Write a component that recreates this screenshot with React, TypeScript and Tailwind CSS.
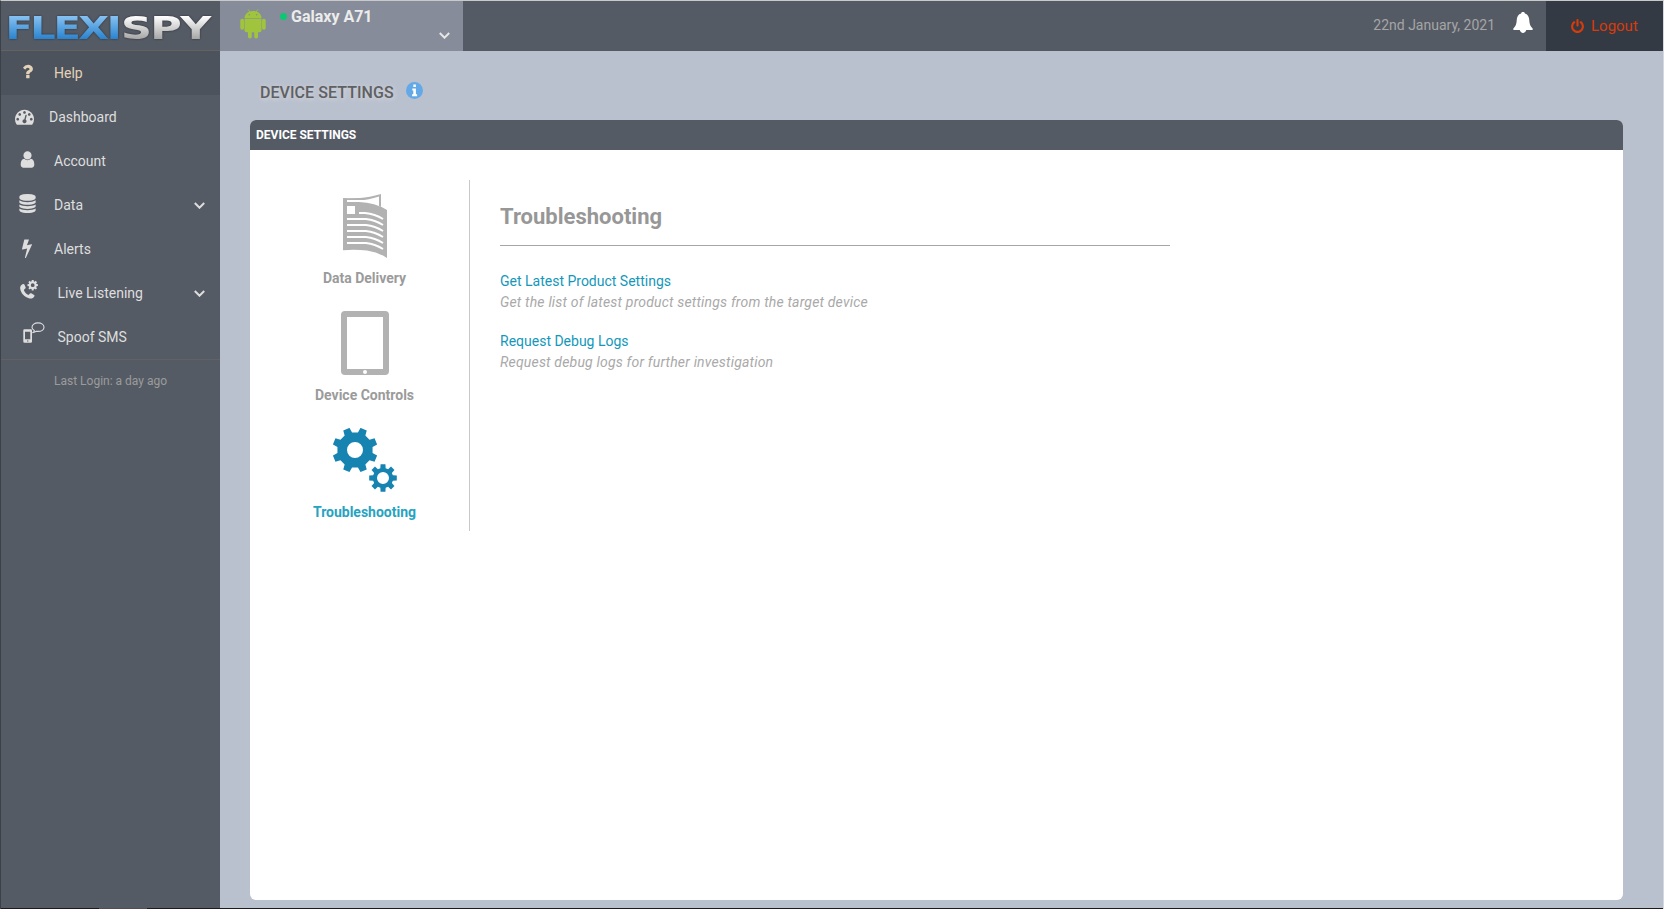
import type { ReactNode } from "react";

const paths = {
  question:
    "M1088 1256v240q0 16-12 28t-28 12h-240q-16 0-28-12t-12-28v-240q0-16 12-28t28-12h240q16 0 28 12t12 28zm316-600q0 54-15.5 101t-35 76.5-55 59.5-57.5 43.5-61 35.5q-41 23-68.5 65t-27.5 67q0 17-12 32.5t-28 15.5h-240q-15 0-25.5-18.5t-10.5-37.5v-45q0-83 65-156.5t143-108.5q59-27 84-56t25-76q0-42-46.5-74t-107.5-32q-65 0-108 29-35 25-107 115-13 16-31 16-12 0-25-8l-164-125q-13-10-15.5-25t5.5-28q160-266 464-266 80 0 161 31t146 83 106 127.5 41 158.5z",
  dashboard:
    "M384 1152q0-53-37.5-90.5t-90.5-37.5-90.5 37.5-37.5 90.5 37.5 90.5 90.5 37.5 90.5-37.5 37.5-90.5zm192-448q0-53-37.5-90.5t-90.5-37.5-90.5 37.5-37.5 90.5 37.5 90.5 90.5 37.5 90.5-37.5 37.5-90.5zm428 481l101-382q6-26-7.5-48.5t-38.5-29.5-48 6.5-30 39.5l-101 382q-60 5-107 43.5t-63 98.5q-20 77 20 146t117 89 146-20 89-117q16-60-6-117t-72-91zm660-33q0-53-37.5-90.5t-90.5-37.5-90.5 37.5-37.5 90.5 37.5 90.5 90.5 37.5 90.5-37.5 37.5-90.5zm-640-640q0-53-37.5-90.5t-90.5-37.5-90.5 37.5-37.5 90.5 37.5 90.5 90.5 37.5 90.5-37.5 37.5-90.5zm448 192q0-53-37.5-90.5t-90.5-37.5-90.5 37.5-37.5 90.5 37.5 90.5 90.5 37.5 90.5-37.5 37.5-90.5zm320 448q0 261-141 483-19 29-54 29h-1402q-35 0-54-29-141-221-141-483 0-182 71-348t191-286 286-191 348-71 348 71 286 191 191 286 71 348z",
  user: "M1536 1399q0 109-62.5 187t-150.5 78h-854q-88 0-150.5-78t-62.5-187q0-85 8.5-160.5t31.5-152 58.5-131 94-89 134.5-34.5q131 128 313 128t313-128q76 0 134.5 34.5t94 89 58.5 131 31.5 152 8.5 160.5zm-256-887q0 159-112.5 271.5t-271.5 112.5-271.5-112.5-112.5-271.5 112.5-271.5 271.5-112.5 271.5 112.5 112.5 271.5z",
  database:
    "M896 768q237 0 443-43t325-127v170q0 69-103 128t-280 93.5-385 34.5-385-34.5-280-93.5-103-128v-170q119 84 325 127t443 43zm0 768q237 0 443-43t325-127v170q0 69-103 128t-280 93.5-385 34.5-385-34.5-280-93.5-103-128v-170q119 84 325 127t443 43zm0-384q237 0 443-43t325-127v170q0 69-103 128t-280 93.5-385 34.5-385-34.5-280-93.5-103-128v-170q119 84 325 127t443 43zm0-1152q208 0 385 34.5t280 93.5 103 128v128q0 69-103 128t-280 93.5-385 34.5-385-34.5-280-93.5-103-128v-128q0-69 103-128t280-93.5 385-34.5z",
  bolt: "M1333 566q18 20 7 44l-540 1157q-13 25-42 25-4 0-14-2-17-5-25.5-19t-4.5-30l197-808-406 101q-4 1-12 1-18 0-31-11-18-15-13-39l201-825q4-14 16-23t28-9h328q19 0 32 12.5t13 29.5q0 8-5 18l-171 463 396-98q8-2 12-2 19 0 34 15z",
  power:
    "M1664 896q0 156-61 298t-164 245-245 164-298 61-298-61-245-164-164-245-61-298q0-182 80.5-343t226.5-270q43-32 95.5-25t83.5 50q32 42 24.5 94.5t-49.5 84.5q-98 74-151.5 181t-53.5 228q0 104 40.5 198.5t109.5 163.5 163.5 109.5 198.5 40.5 198.5-40.5 163.5-109.5 109.5-163.5 40.5-198.5q0-121-53.5-228t-151.5-181q-42-32-49.5-84.5t24.5-94.5q31-43 84-50t95 25q146 109 226.5 270t80.5 343zm-640-768v640q0 52-38 90t-90 38-90-38-38-90v-640q0-52 38-90t90-38 90 38 38 90z",
};

function Glyph({ d, className }: { d: string; className: string }) {
  return (
    <svg viewBox="0 0 1792 1792" fill="currentColor" className={className}>
      <path d={d} />
    </svg>
  );
}

/* Outline of a cog with `n` flat teeth centred on (cx, cy). */
function cog(cx: number, cy: number, outer: number, root: number, n: number, start: number, tip: number, base: number) {
  const pts: string[] = [];
  const at = (r: number, deg: number) => {
    const a = (deg * Math.PI) / 180;
    pts.push(`${(cx + r * Math.cos(a)).toFixed(2)} ${(cy + r * Math.sin(a)).toFixed(2)}`);
  };
  for (let i = 0; i < n; i++) {
    const a = start + (360 / n) * i;
    at(root, a - base);
    at(outer, a - tip);
    at(outer, a + tip);
    at(root, a + base);
  }
  return `M${pts.join("L")}Z`;
}

function hole(cx: number, cy: number, r: number) {
  return `M${cx - r} ${cy}a${r} ${r} 0 1 0 ${2 * r} 0a${r} ${r} 0 1 0 ${-2 * r} 0Z`;
}

function Logo() {
  return (
    <svg className="block h-[49px] w-[219px]" viewBox="1 1 219 49">
      <defs>
        <linearGradient id="blue" gradientUnits="userSpaceOnUse" x1="0" y1="-23" x2="0" y2="0">
          <stop offset="0" stopColor="#86c2f2" />
          <stop offset="1" stopColor="#2a83cf" />
        </linearGradient>
        <linearGradient id="silver" gradientUnits="userSpaceOnUse" x1="0" y1="-23" x2="0" y2="0">
          <stop offset="0" stopColor="#ffffff" />
          <stop offset="1" stopColor="#a6a6a6" />
        </linearGradient>
      </defs>
      <g fontFamily="'DejaVu Sans'" fontWeight="700" fontSize="31.5" className="drop-shadow-[0_0_1px_rgba(0,0,0,0.5)]">
        <text transform="translate(5.400 39) scale(1.27 1)" letterSpacing="-1.900" fill="url(#blue)">FLEXI</text>
        <text transform="translate(121 39) scale(1.365 1)" letterSpacing="-1.200" fill="url(#silver)">SPY</text>
      </g>
    </svg>
  );
}

function Chevron({ className }: { className: string }) {
  return (
    <svg viewBox="0 0 11 7" className={className} fill="none" stroke="currentColor" strokeWidth="2">
      <path d="M.8 1L5.500 5.700L10.200 1" />
    </svg>
  );
}

function AndroidIcon() {
  return (
    <svg viewBox="0 0 26 30" className="h-[30px] w-[26px]" fill="#a0c43c">
      <path d="M4.5 9.2C4.5 5 8 1.9 13 1.9s8.500 3.100 8.500 7.300z" />
      <path d="M8.300.6l1.700 2.600M17.700.6l-1.700 2.600" stroke="#a0c43c" strokeWidth=".8" strokeLinecap="round" />
      <circle cx="9.300" cy="5.800" r=".8" fill="#868c99" />
      <circle cx="16.700" cy="5.800" r=".8" fill="#868c99" />
      <path d="M4.500 9.700h17v11.500a2 2 0 0 1-2 2h-13a2 2 0 0 1-2-2z" />
      <rect x=".3" y="9.700" width="3.700" height="11" rx="1.700" />
      <rect x="22" y="9.700" width="3.700" height="11" rx="1.700" />
      <rect x="8" y="20" width="3.800" height="9.500" rx="1.800" />
      <rect x="14.200" y="20" width="3.800" height="9.500" rx="1.800" />
    </svg>
  );
}

function CallIcon() {
  return (
    <svg viewBox="0 0 18 19" className="h-[19px] w-[18px]" fill="currentColor">
      <path d="M2.500 4.300C.9 5.200 0 6.500.2 8.500c.5 4.600 4.400 8.900 9.300 9.900 2.200.4 3.900-.3 4.900-2.200.3-.6.200-1-.3-1.300l-2.800-1.600c-.5-.3-.9-.2-1.300.2l-1 1.100c-.3.3-.6.400-1 .2-1.900-1-3.200-2.500-4-4.400-.2-.4-.1-.7.200-1l1.100-.9c.4-.3.500-.7.300-1.200l-1.200-2.700c-.3-.6-.9-.8-1.900-.3z" />
      <path fillRule="evenodd" d={cog(12.7, 5.2, 5.3, 4, 8, 0, 10, 16) + hole(12.7, 5.2, 1.9)} />
    </svg>
  );
}

function SmsIcon() {
  return (
    <svg viewBox="0 0 22 21" className="h-[21px] w-[22px]" fill="none" stroke="currentColor">
      <path
        fill="currentColor"
        stroke="none"
        fillRule="evenodd"
        d="M1.500 7.300h6.300q1.200 0 1.200 1.200v11q0 1.200-1.200 1.200h-6.300q-1.200 0-1.200-1.200v-11q0-1.200 1.200-1.200zM2 9.800v7.400h5.300V9.800zM4 18.400v1h1.400v-1z"
      />
      <path strokeWidth="1.100" d="M11.300 8.500C9.700 7.700 9 6.500 9 5.200 9 2.800 11.600.9 15 .9s6 1.900 6 4.300-2.600 4.200-6 4.200q-.9 0-1.700-.1-1.500 1-3.100 1.200 1.100-.9 1.100-2z" />
    </svg>
  );
}

function NewsIcon() {
  return (
    <svg viewBox="0 0 44 64" className="h-[64px] w-[44px]">
      <g fill="#b2b2b2">
        <path d="M0 4.200L17 4Q26 3.500 38 0v13l-2-1V2.400Q25 6 17 6H4v2H0z" />
        <path d="M0 4.200h4V8h12q16 .5 28 8v48q-9-6-20-7.500Q12 55 0 56.200z" />
      </g>
      <g fill="none" stroke="#fff" strokeWidth="2">
        <path d="M16 19h6q10 1 18 6M4 25h19q9 1 17 6M4 31h19q9 1 17 6M4 37h19q9 1 17 6M4 43h19q9 1 17 6M4 49h19q9 1 17 6" />
      </g>
      <path d="M4 12h8v8H4z" fill="#fff" />
    </svg>
  );
}

function TabletIcon() {
  return (
    <svg viewBox="0 0 48 64" className="h-[64px] w-[48px]">
      <rect width="48" height="64" rx="4" fill="#b2b2b2" />
      <path d="M6 6h36v52H6z" fill="#fff" />
      <circle cx="24" cy="61" r="2" fill="#fff" />
    </svg>
  );
}

function CogsIcon() {
  return (
    <svg viewBox="0 0 64 64" className="h-[64px] w-[64px]" fill="#1683b1" fillRule="evenodd">
      <path d={cog(22, 22, 22.8, 17.8, 8, 22.5, 8.5, 13) + hole(22, 22, 8)} />
      <path d={cog(50, 50, 14, 10.2, 8, 0, 10, 15) + hole(50, 50, 6)} />
    </svg>
  );
}

type Item = { label: string; icon: ReactNode; pad: string; more?: boolean };

const items: Item[] = [
  { label: "Dashboard", icon: <Glyph d={paths.dashboard} className="ml-[14px] mt-[-2px] size-[19px]" />, pad: "w-[48px]" },
  { label: "Account", icon: <Glyph d={paths.user} className="ml-[17px] mt-[-3px] size-[19px]" />, pad: "w-[53px]" },
  { label: "Data", icon: <Glyph d={paths.database} className="ml-[17px] mt-[-3px] size-[19px]" />, pad: "w-[53px]", more: true },
  { label: "Alerts", icon: <Glyph d={paths.bolt} className="ml-[16px] mt-[-2px] size-[20px]" />, pad: "w-[53px]" },
  { label: "Live Listening", icon: <span className="mb-[7px] ml-[19px]"><CallIcon /></span>, pad: "w-[56.5px]", more: true },
  { label: "Spoof SMS", icon: <span className="mb-[9px] ml-[22px]"><SmsIcon /></span>, pad: "w-[56.5px]" },
];

function Sidebar() {
  return (
    <aside className="flex w-[219px] shrink-0 flex-col bg-[#555b65] text-[14px] text-[#dedede]">
      <Logo />
      <div className="flex h-[45px] items-center border-t border-[#66625f] bg-[#4d535d] text-[#e3d2b8]">
        <span className="flex w-[53px] shrink-0">
          <Glyph d={paths.question} className="ml-[17px] mt-[-3px] size-[19px]" />
        </span>
        Help
      </div>
      {items.map((it) => (
        <div key={it.label} className="flex h-[44px] items-center">
          <span className={`flex shrink-0 items-center ${it.pad}`}>{it.icon}</span>
          <span className="flex-1">{it.label}</span>
          {it.more && <Chevron className="mr-[15px] mt-px h-[7px] w-[11px]" />}
        </div>
      ))}
      <div className="flex h-[43px] items-center border-t border-[#616264] pl-[53px] text-[12px] leading-[14px] text-[#9b9b9b]">
        Last Login: a day ago
      </div>
    </aside>
  );
}

function Header() {
  return (
    <header className="flex h-[50px] shrink-0 bg-[#555b65]">
      <div className="flex w-[243px] justify-between bg-[#868c99] pl-[20px] pr-[13px]">
        <div className="flex">
          <div className="pt-[8px]"><AndroidIcon /></div>
          <span className="ml-[14px] mt-[12px] size-[7px] rounded-full bg-[#0bc873]" />
          <span className="ml-[4px] mt-[4px] text-[16px] font-bold leading-[24px] text-[#ececec]">Galaxy A71</span>
        </div>
        <Chevron className="mt-[31px] h-[7px] w-[11px] text-[#e6e6e6]" />
      </div>
      <div className="flex flex-1 items-center justify-end">
        <span className="mb-[2px] text-[14px] text-[#a5a5a5]">22nd January, 2021</span>
        <svg viewBox="0 0 20 21" className="mb-[7px] ml-[18px] mr-[13px] h-[21px] w-[20px]" fill="#fff">
          <path d="M10 0c1 0 1.700.5 1.900 1.400 2.700.8 4.100 3 4.300 6.200.2 4.200 1 6.700 3.200 8.600.8.700.6 1.800-.6 1.800h-5.600c-.5 1.800-1.600 2.900-3.200 2.900S7.300 19.800 6.800 18H1.200C0 18-.2 16.900.6 16.200c2.200-1.900 3-4.400 3.200-8.600.2-3.200 1.600-5.400 4.300-6.200C8.300.5 9 0 10 0z" />
        </svg>
      </div>
      <button className="flex w-[117px] items-center bg-[#343a44] pl-[24px] text-[15px] text-[#d93b0b]">
        <Glyph d={paths.power} className="mr-[6px] size-[15px]" />
        Logout
      </button>
    </header>
  );
}

function Tab({ icon, label, color }: { icon: ReactNode; label: string; color: string }) {
  return (
    <div className={`flex h-[117px] flex-col items-center pt-[14px] text-[14px] font-bold ${color}`}>
      {icon}
      <span className="mt-[10px] leading-[20px]">{label}</span>
    </div>
  );
}

function Action({ title, text }: { title: string; text: string }) {
  return (
    <div className="mb-[18px] text-[14px] leading-[21px]">
      <div className="text-[#1497ba]">{title}</div>
      <div className="italic tracking-[0.187px] text-[#a9a9a9]">{text}</div>
    </div>
  );
}

export default function App() {
  return (
    <div className="flex h-[909px] w-[1664px] flex-col overflow-hidden border-l border-r border-t border-l-[#3c4047] border-r-[#d5d9df] border-t-[#c9c9c9] font-['Roboto',sans-serif]">
      <div className="flex min-h-0 flex-1">
        <Sidebar />
        <div className="flex flex-1 flex-col bg-[#bac1ce]">
          <Header />
          <div className="flex h-[69px] items-center pl-[40px] pt-[13px]">
            <h1 className="mt-[2px] text-[16px] font-medium tracking-[0.06px] text-[#5f6062] [text-shadow:1px_1px_4px_#d6d9de]">DEVICE SETTINGS</h1>
            <svg viewBox="0 0 17 17" className="mb-[3px] ml-[12px] size-[17px]">
              <circle cx="8.500" cy="8.500" r="8.500" fill="#63a9e8" />
              <path d="M7.300 2.500h2.600v2.600H7.300zM6.300 6.600h3.600v5.700h1.200v1.900H6.100v-1.900h1.200V8.500h-1z" fill="#fff" />
            </svg>
          </div>
          <section className="ml-[30px] flex h-[780px] w-[1373px] flex-col overflow-hidden rounded-[6px] bg-white">
            <div className="flex h-[30px] shrink-0 items-center bg-[#555b65] pl-[6px] text-[12px] font-bold text-white">
              DEVICE SETTINGS
            </div>
            <div className="flex pt-[30px]">
              <nav className="h-[351px] w-[220px] border-r border-[#c8c8c8] pl-[10px]">
                <Tab icon={<NewsIcon />} label="Data Delivery" color="text-[#9b9b9b]" />
                <Tab icon={<TabletIcon />} label="Device Controls" color="text-[#9b9b9b]" />
                <Tab icon={<CogsIcon />} label="Troubleshooting" color="text-[#27a3c1]" />
              </nav>
              <div className="ml-[30px] w-[670px]">
                <h2 className="mb-[25px] h-[66px] border-b border-[#a6a6a6] pt-[21px] text-[22px] font-bold leading-[32px] text-[#979797]">
                  Troubleshooting
                </h2>
                <Action title="Get Latest Product Settings" text="Get the list of latest product settings from the target device" />
                <Action title="Request Debug Logs" text="Request debug logs for further investigation" />
              </div>
            </div>
          </section>
        </div>
      </div>
      <div className="h-px bg-[#1d191c] pl-[98px]">
        <div className="h-px w-[48px] bg-[#544c4d]" />
      </div>
    </div>
  );
}
